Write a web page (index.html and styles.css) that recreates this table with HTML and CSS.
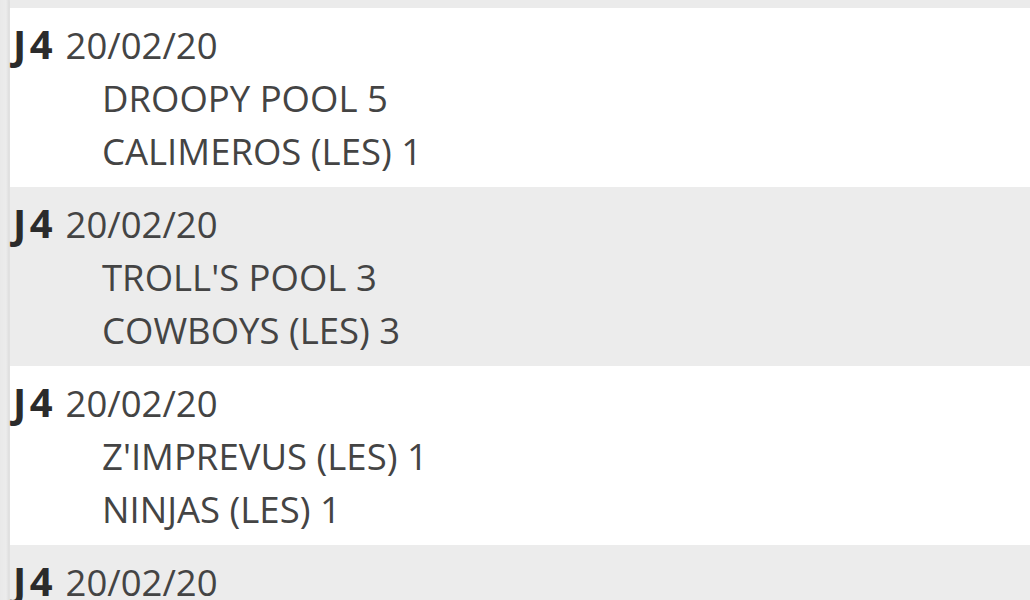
FILE: index.html
```html
<!DOCTYPE html>
<html>
<head>
<meta charset="utf-8">
<link rel="stylesheet" href="styles.css">
</head>
<body>
<div class="page">
  <div class="topband"></div>
  <div class="list">
    <div class="match">
      <div class="head"><b>J4</b> 20/02/20</div>
      <div class="team">DROOPY POOL 5</div>
      <div class="team">CALIMEROS (LES) 1</div>
    </div>
    <div class="match alt">
      <div class="head"><b>J4</b> 20/02/20</div>
      <div class="team">TROLL'S POOL 3</div>
      <div class="team">COWBOYS (LES) 3</div>
    </div>
    <div class="match">
      <div class="head"><b>J4</b> 20/02/20</div>
      <div class="team">Z'IMPREVUS (LES) 1</div>
      <div class="team">NINJAS (LES) 1</div>
    </div>
    <div class="match alt">
      <div class="head"><b>J4</b> 20/02/20</div>
    </div>
  </div>
</div>
</body>
</html>
```

FILE: styles.css
```css
html, body {
  margin: 0;
  padding: 0;
  height: 100%;
  overflow: hidden;
}
body {
  background: linear-gradient(90deg, #e9e9e9 0, #ececec 6px, #dedede 9px, #e4e4e4 10px);
  font-family: "Open Sans", sans-serif;
  color: #444;
}
.page {
  margin-left: 10px;
  background: #fff;
}
.topband {
  height: 8px;
  background: #ebebeb;
  box-shadow: 0 1px 2px rgba(0,0,0,0.04);
}
.match {
  padding: 11px 0 9px 3px;
  font-size: 36.5px;
  line-height: 53px;
  background: #fff;
}
.match.alt {
  background: #ececec;
}
.head b {
  color: #2b2b2b;
  font-weight: 700;
  font-size: 40px;
  line-height: 1;
  letter-spacing: 3.5px;
}
.team {
  padding-left: 89px;
}
```
